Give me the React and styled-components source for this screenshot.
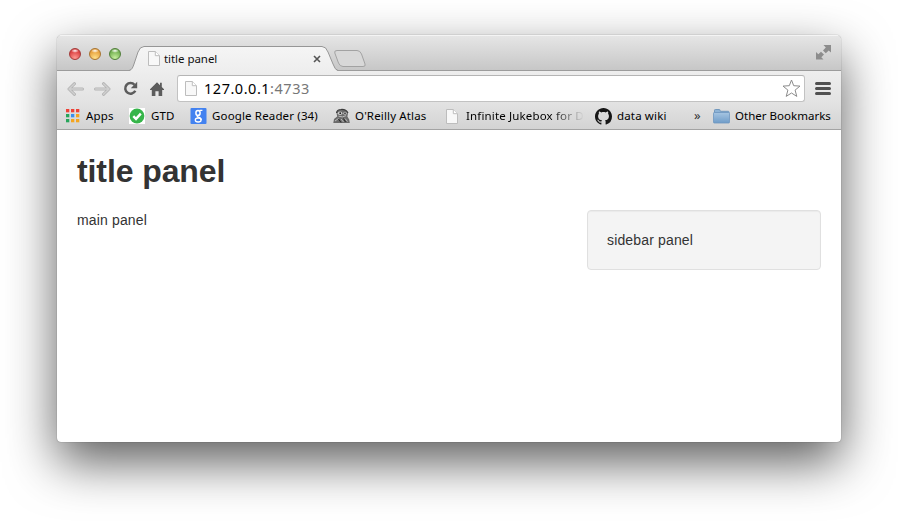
import React from 'react';
import styled, { createGlobalStyle } from 'styled-components';

const GlobalStyle = createGlobalStyle`
  * { box-sizing: border-box; }
  html, body { margin: 0; background: #fff; overflow: hidden; }
  svg { display: block; flex: none; }
`;

const Desktop = styled.div`
  width: 898px;
  height: 521px;
  padding: 35px 57px 79px;
  background: #fff;
  overflow: hidden;
`;

const Window = styled.main`
  width: 784px;
  height: 407px;
  display: flex;
  flex-direction: column;
  border-radius: 5px 5px 4px 4px;
  overflow: hidden;
  background: #fff;
  color: #111;
  font-family: 'Noto Sans', sans-serif;
  box-shadow: 0 0 1px rgba(0, 0, 0, 0.6), 0 20px 50px rgba(0, 0, 0, 0.64);
`;

const TabStrip = styled.header`
  height: 36px;
  flex: none;
  display: flex;
  align-items: flex-end;
  background: linear-gradient(#e6e6e6, #c6c6c6);
  box-shadow: inset 0 1px #f4f4f4, inset 0 -1px #9c9c9c;
`;

const Lights = styled.div`
  display: flex;
  gap: 8px;
  width: 72px;
  height: 36px;
  padding: 13px 0 0 12px;
`;

const Light = styled.span`
  width: 12px;
  height: 12px;
  border-radius: 50%;
  border: 1px solid ${(p) => p.$edge};
  background: radial-gradient(ellipse 4px 2px at 50% 18%, #fff, transparent),
    radial-gradient(circle at 50% 90%, ${(p) => p.$glow}, ${(p) => p.$tone} 75%);
`;

const Tab = styled.div`
  width: 210px;
  height: 25px;
  display: grid;
  margin-right: -6px;

  > * { grid-area: 1 / 1; }
`;

const TabContent = styled.div`
  display: flex;
  align-items: center;
  padding: 0 18px 0 19px;
  font-size: 11.5px;
`;

const TabTitle = styled.span`
  flex: 1;
  margin-left: 4px;
  letter-spacing: -0.05px;
`;

const NewTab = styled.div`
  height: 25px;
  padding-top: 4px;
`;

const Expand = styled.div`
  margin: 0 10px 11px auto;
`;

const Toolbar = styled.nav`
  height: 33px;
  flex: none;
  display: grid;
  grid-template-columns: 27px 29px 27px 27px 628px 1fr;
  align-items: center;
  padding: 2px 10px 0 10px;
  background: linear-gradient(#eeeeee, #e2e2e2);
`;

const AddressBar = styled.div`
  height: 27px;
  display: flex;
  align-items: center;
  padding: 0 3px 0 7px;
  background: #fff;
  border: 1px solid #c2c2c2;
  border-top-color: #b5b5b5;
  border-radius: 3px;
`;

const Url = styled.span`
  flex: 1;
  margin-left: 7px;
  padding-bottom: 1px;
  font-size: 14.5px;
  line-height: 20px;
  color: #000;
  letter-spacing: 0.52px;
`;

const Port = styled.span`
  color: #777;
`;

const MenuSlot = styled.div`
  justify-self: end;
`;

const BookmarkBar = styled.nav`
  height: 26px;
  flex: none;
  display: grid;
  grid-template-columns: 63px 61px 143px 113px 149px 98px 20px 1fr;
  align-items: center;
  padding: 0 0 1px 9px;
  background: linear-gradient(#e2e2e2, #d3d3d3);
  border-bottom: 1px solid #a3a3a3;
`;

const Bookmark = styled.div`
  display: grid;
  grid-template-columns: ${(p) => p.$icon || 22}px auto;
  align-items: center;
  justify-content: start;
  font-size: 11.5px;
  line-height: 16px;
  white-space: nowrap;
  color: #000;
`;

const Label = styled.span`
  letter-spacing: ${(p) => p.$tracking || '0.15px'};
`;

const FadedLabel = styled(Label)`
  -webkit-mask-image: linear-gradient(90deg, #000 72%, transparent 100%);
  mask-image: linear-gradient(90deg, #000 72%, transparent 100%);
`;

const More = styled.span`
  font-size: 13px;
  line-height: 16px;
  padding: 0 0 2px 1px;
  color: #333;
`;

const Page = styled.section`
  flex: 1;
  padding: 20px;
  color: #333;
  font-family: 'Liberation Sans', Arial, sans-serif;
  font-size: 14px;
  line-height: 20px;
  letter-spacing: 0.15px;
`;

const Heading = styled.h1`
  margin: 0;
  padding: 1px 0 0;
  height: 60px;
  font-size: 32px;
  line-height: 40px;
  letter-spacing: -0.1px;
`;

const Columns = styled.div`
  display: flex;
  justify-content: space-between;
  align-items: flex-start;
`;

const Sidebar = styled.aside`
  width: 234px;
  height: 60px;
  padding: 19px;
  background: #f4f4f4;
  border: 1px solid #e0e0e0;
  border-radius: 4px;
  box-shadow: inset 0 1px 1px rgba(0, 0, 0, 0.04);
`;

const PageIcon = ({ width = 12, height = 15 }) => (
  <svg width={width} height={height} viewBox="0 0 12 15">
    <path d="M.5.5h6.800l4.200 4.200v9.800H.5z" fill="#f8f8f8" stroke="#bdbdbd" />
    <path d="M7.300.5v4.200h4.200" fill="#fff" stroke="#bdbdbd" />
  </svg>
);

const TabShape = () => (
  <svg width="210" height="25" viewBox="0 0 210 25">
    <defs>
      <linearGradient id="tab" x2="0" y2="1">
        <stop stopColor="#f5f5f5" />
        <stop offset="1" stopColor="#eeeeee" />
      </linearGradient>
    </defs>
    <path d="M0 25C3 24 4 21 5 18L9 6Q11 .5 15 .5H193Q197 .5 199 6L204 18Q206 24 209 25Z" fill="url(#tab)" />
    <path d="M0 24.500C3 24 4 21 5 18L9 6Q11 .5 15 .5H193Q197 .5 199 6L204 18Q206 24 209 24.500" fill="none" stroke="#969696" />
  </svg>
);

const NewTabShape = () => (
  <svg width="34" height="18" viewBox="0 0 34 18">
    <path d="M4 .5H24Q27 .5 28.500 4L32 14Q33 16.500 30 16.500H10Q7 16.500 5.500 13L1.800 3Q1 .5 4 .5Z" fill="#d8d8d8" stroke="#a2a2a2" />
  </svg>
);

const CloseIcon = () => (
  <svg width="8" height="8" viewBox="0 0 8 8">
    <path d="M1 1l6 6M7 1L1 7" stroke="#555" strokeWidth="1.600" />
  </svg>
);

const ExpandIcon = () => (
  <svg width="15" height="15" viewBox="0 0 15 15" fill="#8d8d8d">
    <path d="M7.500 0H15v7.500l-2.300-2.100-2.900 2.900L7 5.500l2.800-2.900z" />
    <path d="M0 7v7.500h7.500L5.300 12.300 8 9.600 5 6.700 2.300 9.300z" />
  </svg>
);

const ArrowIcon = ({ forward }) => (
  <svg width="17" height="14" viewBox="0 0 17 14">
    <path
      d={forward ? 'M1.500 7h13.500M9.500 1.700L15 7l-5.500 5.300' : 'M15.500 7H2M7.500 1.700L2 7l5.500 5.300'}
      fill="none" stroke="#b4b4b4" strokeWidth="3" strokeLinecap="round" strokeLinejoin="round"
    />
    <path
      d={forward ? 'M1.500 7h13.500M9.500 1.700L15 7l-5.500 5.300' : 'M15.500 7H2M7.500 1.700L2 7l5.500 5.300'}
      fill="none" stroke="#cfcfcf" strokeWidth="1.400" strokeLinecap="round" strokeLinejoin="round"
    />
  </svg>
);

const ReloadIcon = () => (
  <svg width="15" height="15" viewBox="0 0 15 15">
    <path d="M11.500 3.800A5.300 5.300 0 1 0 12.300 9.700" fill="none" stroke="#5c5c5c" strokeWidth="2.500" />
    <path d="M14.200.8v6.400H7.800z" fill="#5c5c5c" />
  </svg>
);

const HomeIcon = () => (
  <svg width="14" height="14" viewBox="0 0 14 14" fill="#5c5c5c">
    <path d="M7 .2l3 3V.8h1.800v4.200L14 7.300v.7H12.200V14H8.600V9.300H5.400V14H1.800V8H0v-.7z" />
  </svg>
);

const StarIcon = () => (
  <svg width="19" height="19" viewBox="0 0 19 19">
    <path d="M9.500 1l2.200 5.700 6.300.4-4.900 4 1.700 6.300-5.300-3.400-5.300 3.400 1.700-6.300L1 7.100l6.300-.4z" fill="#fff" stroke="#8b8b8b" strokeLinejoin="round" />
  </svg>
);

const MenuIcon = () => (
  <svg width="16" height="14" viewBox="0 0 16 14">
    <path d="M1.500 1.500h13M1.500 6.500h13M1.500 11.500h13" stroke="#505050" strokeWidth="3" strokeLinecap="round" />
  </svg>
);

const APP_COLORS = ['#ee4136', '#ee4136', '#ee4136', '#27a55a', '#3b8eed', '#f4a51f', '#27a55a', '#f4a51f', '#f4a51f'];

const AppsIcon = () => (
  <svg width="14" height="14" viewBox="0 0 14 14">
    {APP_COLORS.map((color, i) => (
      <rect key={i} x={(i % 3) * 5} y={Math.floor(i / 3) * 5} width="3.300" height="3.300" fill={color} />
    ))}
  </svg>
);

const CheckIcon = () => (
  <svg width="17" height="16" viewBox="0 0 17 16">
    <rect width="16" height="16" fill="#fff" />
    <circle cx="8" cy="8" r="7.400" fill="#36b54a" />
    <path d="M4.300 8.200l2.700 2.700 4.800-5.300" fill="none" stroke="#fff" strokeWidth="2.400" />
  </svg>
);

const ReaderIcon = () => (
  <svg width="17" height="16" viewBox="0 0 17 16">
    <rect x=".5" width="16" height="16" rx="1" fill="#4382f0" />
    <g fill="none" stroke="#fff">
      <ellipse cx="8" cy="4.900" rx="2.100" ry="2.500" strokeWidth="1.500" />
      <path d="M9.500 2.300h2.900M9 7.200Q6 8.300 8.200 9.100 11.500 10 11.200 12" strokeWidth="1.300" />
      <ellipse cx="8.200" cy="12" rx="2.900" ry="2" strokeWidth="1.300" />
    </g>
  </svg>
);

const TarsierIcon = () => (
  <svg width="17" height="16" viewBox="0 0 17 16">
    <path d="M3.500 5Q4 1.500 8 1.500q6-.5 7 4l-.6 3 1.800 3 .6 3.500H.3l.7-4L4.200 8.500z" fill="#6b6b6b" />
    <path d="M3.500 5Q4 1.500 8 1.500q5-.4 7 3.500" fill="none" stroke="#3c3c3c" strokeWidth="1.200" />
    <ellipse cx="7" cy="5.200" rx="2.300" ry="1.700" fill="#cacaca" />
    <ellipse cx="12" cy="5.200" rx="1.800" ry="1.500" fill="#b5b5b5" />
    <circle cx="7.200" cy="5.200" r=".9" fill="#222" />
    <circle cx="12" cy="5.200" r=".8" fill="#222" />
    <path d="M5.500 8.200q4 1.600 7.500-.5M2 13l3.500-2.500M8 11l2.500 3M12 10.500l2.500 3" fill="none" stroke="#bcbcbc" />
    <path d="M5.500 11l2.500 3.500M10.500 10.500l2 3.500" stroke="#252525" />
  </svg>
);

const GitHubIcon = () => (
  <svg width="17" height="17" viewBox="0 0 16 16">
    <path fill="#161616" d="M8 0C3.580 0 0 3.580 0 8c0 3.540 2.290 6.530 5.470 7.590.4.070.55-.17.55-.38 0-.19-.01-.82-.01-1.490-2.010.37-2.530-.49-2.690-.94-.09-.23-.48-.94-.82-1.130-.28-.15-.68-.52-.01-.53.63-.01 1.080.58 1.230.82.72 1.210 1.870.87 2.330.66.07-.52.28-.87.51-1.070-1.780-.2-3.640-.89-3.640-3.950 0-.87.31-1.590.82-2.150-.08-.2-.36-1.020.08-2.120 0 0 .67-.21 2.200.82.64-.18 1.320-.27 2-.27s1.360.09 2 .27c1.530-1.040 2.200-.82 2.200-.82.44 1.100.16 1.920.08 2.120.51.56.82 1.270.82 2.150 0 3.070-1.870 3.750-3.650 3.950.29.25.54.73.54 1.480 0 1.070-.01 1.930-.01 2.200 0 .21.15.46.55.38A8.010 8.010 0 0 0 16 8c0-4.420-3.580-8-8-8z" />
  </svg>
);

const FolderIcon = () => (
  <svg width="17" height="15" viewBox="0 0 17 15">
    <defs>
      <linearGradient id="folder" x2="0" y2="1">
        <stop stopColor="#a6c5e2" />
        <stop offset="1" stopColor="#6f9cc8" />
      </linearGradient>
    </defs>
    <path d="M1.500 3V1.200Q1.500.5 2.300.5h4Q7 .5 7 1.200l.4 1.100h7.800q.8 0 .8.700v1H1.500z" fill="#8fb4d6" stroke="#7298bd" />
    <rect x=".5" y="3.500" width="16" height="10.500" rx=".8" fill="url(#folder)" stroke="#6e97c0" strokeWidth=".8" />
  </svg>
);

export default function App() {
  return (
    <Desktop>
      <GlobalStyle />
      <Window>
        <TabStrip>
          <Lights>
            <Light $edge="#a33a38" $tone="#d8383a" $glow="#ff9a92" />
            <Light $edge="#a87430" $tone="#e59b35" $glow="#ffe08a" />
            <Light $edge="#517f3a" $tone="#6cab4a" $glow="#c8f0a0" />
          </Lights>
          <Tab>
            <TabShape />
            <TabContent>
              <PageIcon />
              <TabTitle>title panel</TabTitle>
              <CloseIcon />
            </TabContent>
          </Tab>
          <NewTab><NewTabShape /></NewTab>
          <Expand><ExpandIcon /></Expand>
        </TabStrip>
        <Toolbar>
          <ArrowIcon />
          <ArrowIcon forward />
          <ReloadIcon />
          <HomeIcon />
          <AddressBar>
            <PageIcon />
            <Url>127.0.0.1<Port>:4733</Port></Url>
            <StarIcon />
          </AddressBar>
          <MenuSlot><MenuIcon /></MenuSlot>
        </Toolbar>
        <BookmarkBar>
          <Bookmark $icon={20}><AppsIcon /><Label>Apps</Label></Bookmark>
          <Bookmark><CheckIcon /><Label>GTD</Label></Bookmark>
          <Bookmark><ReaderIcon /><Label>Google Reader (34)</Label></Bookmark>
          <Bookmark><TarsierIcon /><Label>O'Reilly Atlas</Label></Bookmark>
          <Bookmark $icon={20}><PageIcon /><FadedLabel $tracking="0.15px">Infinite Jukebox for D</FadedLabel></Bookmark>
          <Bookmark><GitHubIcon /><Label>data wiki</Label></Bookmark>
          <More>»</More>
          <Bookmark><FolderIcon /><Label $tracking="0.02px">Other Bookmarks</Label></Bookmark>
        </BookmarkBar>
        <Page>
          <Heading>title panel</Heading>
          <Columns>
            <div>main panel</div>
            <Sidebar>sidebar panel</Sidebar>
          </Columns>
        </Page>
      </Window>
    </Desktop>
  );
}
